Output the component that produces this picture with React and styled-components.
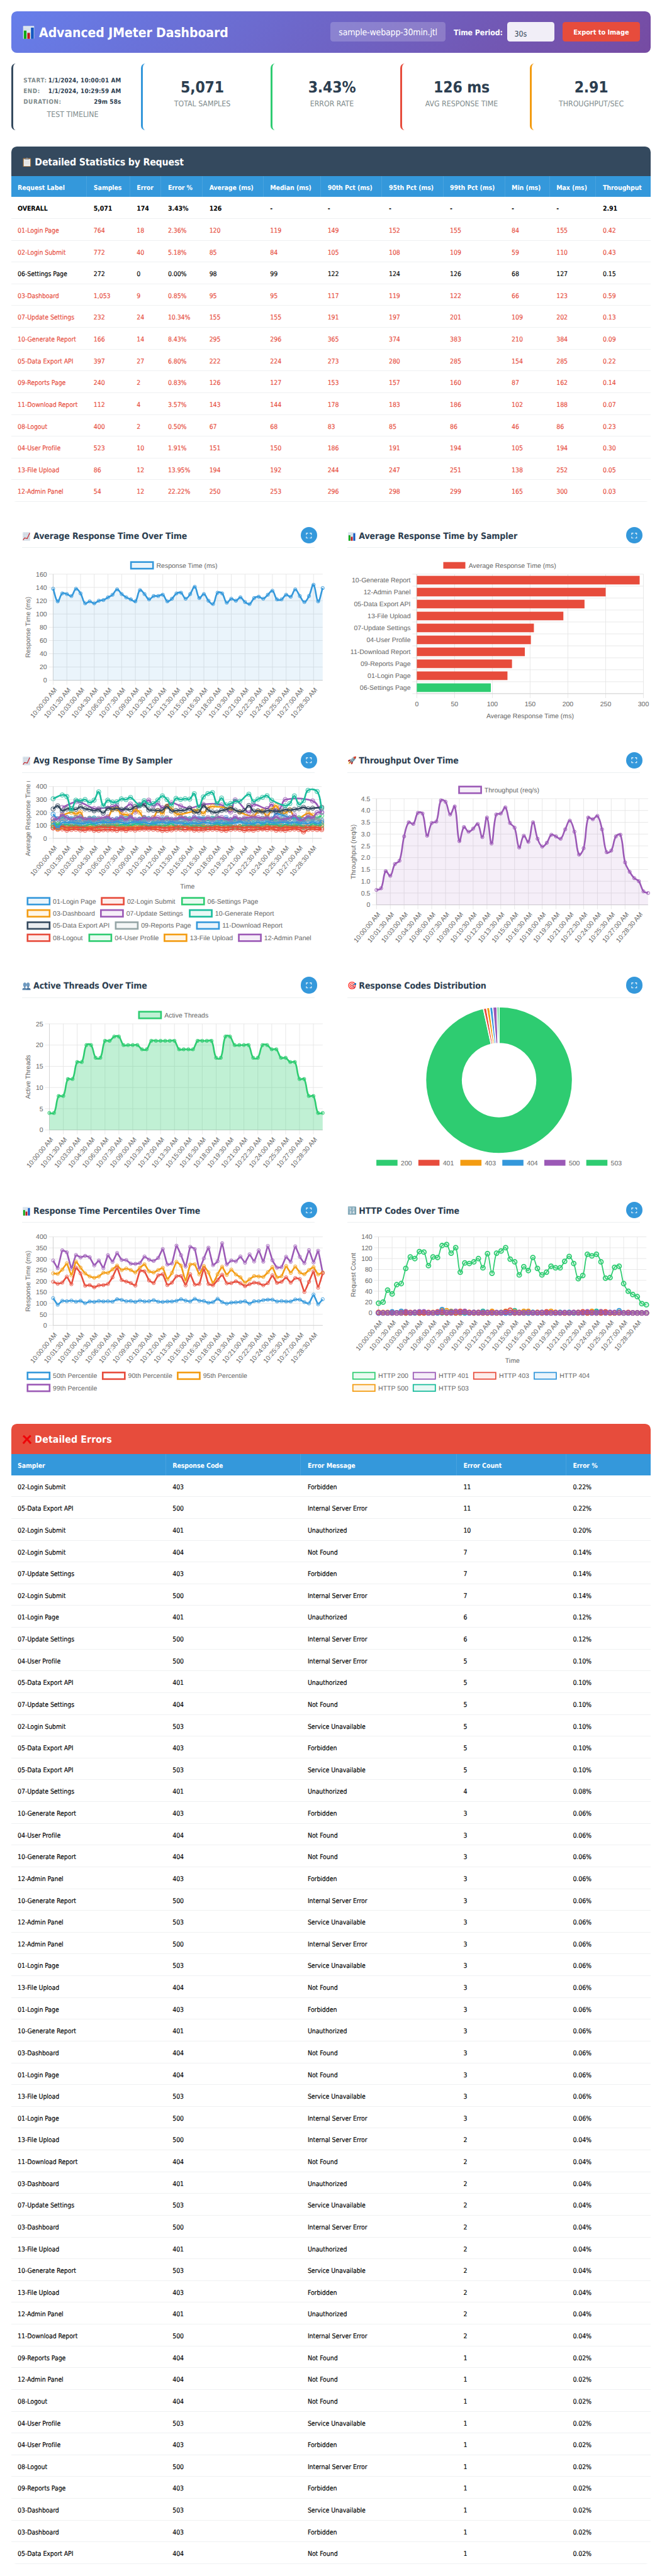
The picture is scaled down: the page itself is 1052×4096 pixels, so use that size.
import React from 'react';
import styled, { createGlobalStyle } from 'styled-components';

/* 1rem = 10 design pixels of a 1200px wide page */
const GlobalStyle = createGlobalStyle`
  html { font-size: 8.7667px; }
  body {
    margin: 0;
    background: #fff;
    color: #000;
    font-family: "DejaVu Sans Condensed", "DejaVu Sans", Tahoma, sans-serif;
    text-rendering: geometricPrecision;
  }
  *, *::before, *::after { box-sizing: border-box; }
`;

const C = {
  blue: '#3498db', red: '#e74c3c', green: '#2ecc71', orange: '#f39c12',
  purple: '#9b59b6', teal: '#1abc9c', dark: '#34495e', grey: '#95a5a6', ink: '#2c3e50',
};

const Page = styled.main`
  width: 120rem;
  height: 467.26rem;
  padding: 2rem;
  overflow: hidden;
`;

const Header = styled.header`
  display: flex;
  align-items: center;
  justify-content: space-between;
  height: 7.55rem;
  padding: 0 2rem;
  border-radius: 1rem;
  color: #fff;
  background: linear-gradient(135deg, #667eea 0%, #764ba2 100%);
`;

const Title = styled.h1`
  display: flex;
  align-items: center;
  margin: 0;
  padding-top: 0.3rem;
  font-size: 2.4rem;
  letter-spacing: -0.01rem;
  white-space: nowrap;
`;

const Emoji = styled.span`
  display: inline-flex;
  align-items: center;
  justify-content: center;
  flex: none;
  width: 1em;
  margin-right: 0.285em;
  font-family: "Noto Color Emoji";
  font-weight: 400;
  line-height: 1;
  letter-spacing: 0;
  & > span { font-size: 0.84em; }
  & > svg { width: 1em; height: 1em; }
`;

const Controls = styled.div`
  display: flex;
  align-items: center;
`;

const FileName = styled.div`
  display: flex;
  align-items: center;
  width: 20.8rem;
  height: 3.55rem;
  padding: 0.3rem 0 0 1.5rem;
  border-radius: 0.5rem;
  background: rgba(255, 255, 255, 0.2);
  font-size: 1.6rem;
  letter-spacing: -0.02rem;
  white-space: nowrap;
`;

const FieldLabel = styled.label`
  width: 9.7rem;
  margin-left: 1.55rem;
  padding-top: 0.25rem;
  font-size: 1.4rem;
  font-weight: 700;
  letter-spacing: -0.01rem;
  white-space: nowrap;
`;

const PeriodField = styled.div`
  display: flex;
  align-items: center;
  width: 8.5rem;
  height: 3.55rem;
  padding: 0.7rem 0 0 1.3rem;
  border-radius: 0.5rem;
  background: rgba(255, 255, 255, 0.9);
  color: ${C.ink};
  font-size: 1.4rem;
`;

const ExportButton = styled.button`
  width: 14.05rem;
  height: 3.55rem;
  margin-left: 1.5rem;
  padding: 0.2rem 0 0;
  border: 0;
  border-radius: 0.5rem;
  background: ${C.red};
  color: #fff;
  font: 700 1.25rem "DejaVu Sans Condensed", sans-serif;
  letter-spacing: -0.005rem;
`;

const Summary = styled.section`
  display: grid;
  grid-template-columns: repeat(5, minmax(0, 1fr));
  gap: 1.5rem;
  margin-top: 2rem;
`;

const Card = styled.div`
  height: 12.05rem;
  padding: 2.15rem 2rem 0;
  border-left: 0.4rem solid ${p => p.$accent};
  border-radius: 0.8rem;
  text-align: center;
`;

const TimeRow = styled.div`
  display: flex;
  justify-content: space-between;
  align-items: center;
  width: 17.7rem;
  margin-left: -0.1rem;
  height: 1.93rem;
  color: ${C.ink};
  font-size: 1.12rem;
  font-weight: 700;
  letter-spacing: 0.018rem;
  white-space: nowrap;
`;

const TimeKey = styled.span`
  color: #7f8c8d;
  letter-spacing: 0.07rem;
`;

const BigValue = styled.div`
  height: 3.4rem;
  margin-top: 0.45rem;
  color: ${C.ink};
  font-size: 2.8rem;
  font-weight: 700;
  line-height: 3.4rem;
  letter-spacing: -0.02rem;
`;

const CardLabel = styled.div`
  margin-top: ${p => (p.$top || 0)}rem;
  color: #7f8c8d;
  font-size: 1.4rem;
  line-height: 1.8rem;
  white-space: nowrap;
`;

const Section = styled.section`
  margin-top: 3rem;
  border-radius: 1rem;
  overflow: hidden;
`;

const SectionTitle = styled.h2`
  display: flex;
  align-items: center;
  height: ${p => p.$height}rem;
  margin: 0;
  padding: 0.2rem 2rem 0;
  background: ${p => p.$bg};
  color: #fff;
  font-size: 1.8rem;
  letter-spacing: ${p => p.$tracking || 0}rem;
`;

const statsColumns = '13.78fr 7.8fr 5.66fr 7.5fr 11.02fr 10.42fr 11.1fr 11.08fr 11.17fr 8.12fr 8.41fr 9.92fr';
const errorColumns = '28.08fr 24.49fr 28.23fr 19.85fr 15.35fr';

const Row = styled.div`
  display: grid;
  grid-template-columns: ${p => p.$columns};
  height: ${p => p.$height || 3.95}rem;
  border-bottom: 1px solid #eff1f2;
  color: ${p => (p.$failed ? C.red : '#000')};
  font-size: 1.2rem;
  font-weight: ${p => (p.$bold ? 700 : 400)};
  letter-spacing: -0.01rem;
  -webkit-text-stroke: ${p => (p.$bold ? 0 : 0.15)}px currentColor;
`;

const HeadRow = styled(Row)`
  border-bottom: 0;
  background: ${C.blue};
  color: #fff;
  font-weight: 700;
`;

const Cell = styled.div`
  display: flex;
  align-items: center;
  min-width: 0;
  padding: 0.5rem 0 0 1.2rem;
  white-space: nowrap;
`;

const HeadCell = styled(Cell)`
  border-right: 1px solid rgba(255, 255, 255, 0.1);
  &:last-child { border-right: 0; }
`;

const ChartGrid = styled.section`
  display: grid;
  grid-template-columns: repeat(2, minmax(0, 1fr));
  gap: 2rem;
  margin-top: 3.05rem;
`;

const ChartCard = styled.article`
  position: relative;
  height: 38.8rem;
  padding: 2rem;
  border-radius: 1rem;
  background: #fff;
`;

const ChartTitle = styled.h3`
  display: flex;
  align-items: center;
  height: 3.3rem;
  margin: 0 0 1.55rem;
  padding-bottom: 0.85rem;
  border-bottom: 0.2rem solid #ecf0f1;
  color: ${C.ink};
  font-size: 1.6rem;
  letter-spacing: -0.012rem;
  white-space: nowrap;
`;

const ExpandButton = styled.button`
  position: absolute;
  top: 1.5rem;
  right: 1.5rem;
  display: flex;
  align-items: center;
  justify-content: center;
  width: 3rem;
  height: 3rem;
  padding: 0.1rem 0 0;
  border: 0;
  border-radius: 50%;
  background: ${C.blue};
  & > svg { width: 1.1rem; height: 1.1rem; }
`;

const Plot = styled.svg`
  display: block;
  width: 55rem;
  height: 30rem;
  overflow: hidden;
  font-family: "Liberation Sans", Arial, sans-serif;
  font-size: 12px;
`;

/* ---------- icons ---------- */

const BarsIcon = () => (
  <Emoji>
    <svg viewBox="0 0 16 16">
      <rect x="1.3" y="0.2" width="13.4" height="15.6" rx="0.5" fill="#dbe5ee" />
      <path d="M1.3 4h13.4M1.3 8h13.4M1.3 12h13.4" stroke="#c3d2df" strokeWidth="0.4" />
      <rect x="2.2" y="5.8" width="3.2" height="10" fill="#0faa14" />
      <rect x="6.4" y="8.6" width="3.2" height="7.2" fill="#c4161c" />
      <rect x="10.8" y="2.2" width="3.4" height="13.6" fill="#1257c2" />
    </svg>
  </Emoji>
);

const TrendIcon = () => (
  <Emoji>
    <svg viewBox="0 0 16 16">
      <rect x="1.3" y="0.2" width="13.4" height="15.6" rx="0.5" fill="#d9e2ea" />
      <path d="M1.3 4h13.4M1.3 8h13.4M1.3 12h13.4M5 .2v15.6M9 .2v15.6M12.6 .2v15.6" stroke="#c0ccd7" strokeWidth="0.4" />
      <path d="M1.9 14.6L4.6 10.6L9.4 11.9L14 1.6" fill="none" stroke="#c4161c" strokeWidth="1.3" />
    </svg>
  </Emoji>
);

const ClipboardIcon = () => (
  <Emoji>
    <svg viewBox="0 0 16 16">
      <rect x="1.6" y="1.6" width="12.8" height="14.2" rx="1" fill="#a9763f" />
      <rect x="2.8" y="3" width="10.4" height="11.4" fill="#ececec" />
      <path d="M4.4 6.5h7.2M4.4 8.5h7.2M4.4 10.5h7.2" stroke="#cfcfcf" strokeWidth="0.6" />
      <path d="M4.4 3.8V2.2h2.2L8 .2l1.4 2h2.2v1.6z" fill="#8d9399" />
    </svg>
  </Emoji>
);

const PeopleIcon = () => (
  <Emoji>
    <svg viewBox="0 0 16 16" fill="#5d86ad">
      <ellipse cx="5" cy="5.4" rx="3" ry="4" fill="#6f9ac0" />
      <ellipse cx="11" cy="5.4" rx="3" ry="4" fill="#6f9ac0" />
      <path d="M4 8h2v3c1.500.3 2 1.300 2 2.500V15H.6v-1.500C.6 12 2 11.300 4 11z" />
      <path d="M10 8h2v3c2 .3 3.400 1 3.400 2.500V15H8v-1.500c0-1.200.5-2.200 2-2.500z" fill="#4b749c" />
    </svg>
  </Emoji>
);

const CrossIcon = () => (
  <Emoji>
    <svg viewBox="0 0 16 16">
      <path d="M2 1.800C5 4.500 11 10.500 14.300 14.400M14 1.600C10.500 4.800 5 10.500 1.800 14.400" fill="none" stroke="#ee0508" strokeWidth="3.100" />
    </svg>
  </Emoji>
);

const Glyph = ({ children }) => <Emoji><span>{children}</span></Emoji>;

/* ---------- data ---------- */

const statsHead = ['Request Label', 'Samples', 'Error', 'Error %', 'Average (ms)', 'Median (ms)', '90th Pct (ms)', '95th Pct (ms)', '99th Pct (ms)', 'Min (ms)', 'Max (ms)', 'Throughput'];
const stats = `OVERALL|5,071|174|3.43%|126|-|-|-|-|-|-|2.91
01-Login Page|764|18|2.36%|120|119|149|152|155|84|155|0.42
02-Login Submit|772|40|5.18%|85|84|105|108|109|59|110|0.43
06-Settings Page|272|0|0.00%|98|99|122|124|126|68|127|0.15
03-Dashboard|1,053|9|0.85%|95|95|117|119|122|66|123|0.59
07-Update Settings|232|24|10.34%|155|155|191|197|201|109|202|0.13
10-Generate Report|166|14|8.43%|295|296|365|374|383|210|384|0.09
05-Data Export API|397|27|6.80%|222|224|273|280|285|154|285|0.22
09-Reports Page|240|2|0.83%|126|127|153|157|160|87|162|0.14
11-Download Report|112|4|3.57%|143|144|178|183|186|102|188|0.07
08-Logout|400|2|0.50%|67|68|83|85|86|46|86|0.23
04-User Profile|523|10|1.91%|151|150|186|191|194|105|194|0.30
13-File Upload|86|12|13.95%|194|192|244|247|251|138|252|0.05
12-Admin Panel|54|12|22.22%|250|253|296|298|299|165|300|0.03`.split('\n').map(r => r.split('|'));

const samplers = {
  '01': '01-Login Page', '02': '02-Login Submit', '03': '03-Dashboard', '04': '04-User Profile',
  '05': '05-Data Export API', '07': '07-Update Settings', '08': '08-Logout', '09': '09-Reports Page',
  10: '10-Generate Report', 11: '11-Download Report', 12: '12-Admin Panel', 13: '13-File Upload',
};
const messages = { 401: 'Unauthorized', 403: 'Forbidden', 404: 'Not Found', 500: 'Internal Server Error', 503: 'Service Unavailable' };
const percents = { 11: '0.22%', 10: '0.20%', 7: '0.14%', 6: '0.12%', 5: '0.10%', 4: '0.08%', 3: '0.06%', 2: '0.04%', 1: '0.02%' };
const errors = `02 403 11,05 500 11,02 401 10,02 404 7,07 403 7,02 500 7,01 401 6,07 500 6,04 500 5,05 401 5,07 404 5,02 503 5,05 403 5,05 503 5,07 401 4,10 403 3,04 404 3,10 404 3,12 403 3,10 500 3,12 503 3,12 500 3,01 503 3,13 404 3,01 403 3,10 401 3,03 404 3,01 404 3,13 503 3,01 500 3,13 500 2,11 404 2,03 401 2,07 503 2,03 500 2,13 401 2,10 503 2,13 403 2,12 401 2,11 500 2,09 404 1,12 404 1,08 404 1,04 503 1,04 403 1,08 500 1,09 403 1,03 503 1,03 403 1,05 404 1`
  .split(',').map(s => s.split(' ')).map(([s, c, n]) => [samplers[s], c, messages[c], n, percents[n]]);

const list = s => s.split(/[\s,]+/).map(Number);
const sparse = s => s.split(/\s+/).map(p => p.split(':').map(Number));
const dense = a => a.map((v, i) => [i, v]);

const avgTime = list('138 119 131 130 127 138 131 116 119 116 120 121 125 129 137 130 125 122 119 136 130 122 127 127 129 119 123 131 132 123 130 141 124 130 120 115 132 131 117 123 120 125 118 115 124 126 123 129 135 122 122 129 126 137 127 118 127 144 119 139');
const throughput = list('.63 .70 1.43 1.23 1.73 1.87 2.9 3.5 3.43 3.9 3.87 2.93 3.47 3.53 4.43 4.37 3.83 4.17 2.7 3.3 3.1 3.23 3.43 2.87 3.7 2.6 3.83 3.87 4.13 3.47 3.27 2.43 2.93 2.67 3.5 2.8 2.47 2.63 2.97 2.9 2.8 3.2 3.57 3.1 2.13 2.4 3.7 3.63 3.77 3.2 2.23 2.3 2.9 2.97 1.8 1.4 1.13 1 .57 .5');
const threads = list('4 4 8 8 12 12 16 16 20 20 17 17 21 21 22 22 20 20 20 20 19 19 21 21 21 21 21 21 19 19 19 19 21 21 21 21 17 17 22 22 20 20 20 20 17 17 20 20 19 19 17 17 16 16 12 12 8 8 4 4');
const p50 = list('123 93 111 109 112 107 111 100 108 106 110 108 109 107 118 115 109 110 106 112 108 109 114 107 106 108 108 111 118 112 108 120 111 110 102 105 120 105 98 103 104 106 109 98 109 109 114 116 116 108 110 108 108 117 116 105 99 139 95 118');
const p90 = list('197 188 193 220 186 261 235 179 182 172 181 182 187 217 261 205 198 191 180 247 244 203 191 226 231 182 193 222 223 181 231 184 187 257 187 181 205 229 190 191 199 190 177 186 193 190 181 191 226 192 197 217 193 214 209 151 197 244 170 235');
const p95 = list('235 233 252 280 226 288 261 235 221 215 221 238 237 253 270 250 257 250 239 261 276 244 239 250 260 208 237 287 270 200 275 276 230 268 239 190 231 265 228 252 230 217 193 208 223 221 219 240 263 217 222 268 237 266 239 231 250 263 230 239');
const p99 = list('293 259 339 330 257 318 307 314 308 271 293 259 317 287 327 296 295 279 278 282 311 297 291 305 345 275 280 360 317 266 355 345 254 303 351 272 290 371 275 293 289 311 283 321 289 339 288 359 294 261 263 310 287 357 310 281 340 284 337 238');
const http200 = list('18 20 42 35 52 54 82 103 100 113 112 87 103 102 124 126 110 120 75 92 91 94 100 83 109 73 110 114 120 99 94 70 85 78 102 82 70 75 86 83 83 95 104 91 63 69 108 105 108 94 64 65 84 86 54 40 34 30 17 15');
const http401 = list('0 0 0 0 0 0 2 0 1 2 2 0 0 1 2 1 0 3 1 3 0 1 0 1 1 0 1 0 1 0 1 0 0 1 0 0 1 0 0 0 0 1 0 1 0 0 2 0 0 2 0 1 1 0 0 0 0 0 0 0');
const http403 = list('1 0 0 0 0 0 0 1 1 0 0 1 0 2 1 0 1 0 3 2 1 0 1 0 0 1 0 0 2 5 0 1 0 1 0 1 0 2 0 1 0 0 0 1 1 2 0 1 0 0 2 0 0 0 0 1 0 0 0 0');
const http404 = list('0 0 0 2 0 3 1 0 0 0 1 0 0 0 6 0 2 0 1 0 0 1 1 0 1 0 0 1 0 0 0 1 0 0 1 0 0 1 0 0 1 0 1 0 1 0 0 0 1 0 0 1 0 4 0 0 0 0 0 0');
const http500 = list('1 1 1 0 0 1 2 0 0 1 0 0 1 0 4 4 3 1 0 1 1 1 0 0 1 3 0 1 3 0 2 0 3 3 0 1 0 1 3 1 0 0 0 0 0 1 0 3 0 2 1 0 0 1 0 0 0 0 0 0');
const http503 = list('0 0 0 1 0 0 0 0 1 0 0 0 0 1 0 1 0 0 0 0 0 0 0 3 0 0 0 0 0 1 4 0 1 0 1 0 1 0 0 0 1 0 1 0 0 0 1 0 3 0 1 0 0 1 0 0 0 0 0 0');

/* repeatable scatter around a sampler's mean */
const scatter = (seed, mean, spread, fixed = {}) => {
  let s = seed * 7919;
  return dense(Array.from({ length: 60 }, (_, i) => {
    s = (s * 16807) % 2147483647;
    return fixed[i] ?? mean + (s / 2147483647 - 0.5) * 2 * spread;
  }));
};

const bySampler = [
  { label: '01-Login Page', color: C.blue, points: scatter(11, 121, 6, { 0: 124, 1: 84, 2: 122 }) },
  { label: '02-Login Submit', color: C.red, points: scatter(23, 84, 5, { 1: 82, 2: 93 }) },
  { label: '06-Settings Page', color: C.green, points: scatter(37, 98, 14, { 0: 95 }) },
  { label: '03-Dashboard', color: C.orange, points: scatter(41, 94, 10, { 0: 110, 1: 76 }) },
  { label: '07-Update Settings', color: C.purple, points: scatter(53, 154, 14, { 0: 150, 2: 183, 53: 180, 56: 172, 57: 158, 58: 199, 59: 200 }) },
  { label: '10-Generate Report', color: C.teal, points: sparse('0:306 2:335 3:323 4:218 5:295 6:290 7:300 8:277 9:295 10:359 11:252 12:295 13:280 14:282 15:305 16:299 17:316 19:257 20:291 21:262 22:269 23:296 24:328 25:300 26:257 27:309 28:300 29:306 30:303 31:345 32:240 33:320 34:346 35:353 36:269 37:311 38:258 39:269 40:286 41:286 43:341 44:285 45:303 46:317 47:329 48:295 51:252 52:269 53:328 54:263 55:291 56:371 58:362 59:230') },
  { label: '05-Data Export API', color: C.dark, points: sparse('0:227 1:251 2:213 3:227 4:230 5:224 6:243 7:228 8:224 9:213 10:221 11:196 12:232 13:226 14:232 15:224 16:227 17:222 18:246 19:251 20:258 21:220 22:218 23:215 24:218 25:244 26:211 27:215 28:216 29:218 30:232 31:205 32:201 33:252 34:221 35:204 36:202 37:216 38:221 39:237 40:218 41:206 42:215 43:254 44:211 45:213 46:204 47:213 48:213 49:209 50:211 51:222 52:218 53:224 54:229 55:240 56:229 57:233 59:240') },
  { label: '09-Reports Page', color: C.grey, points: scatter(61, 136, 16, { 0: 150, 1: 108, 56: 136, 57: 150, 58: 148, 59: 143 }) },
  { label: '11-Download Report', color: C.blue, points: scatter(79, 147, 14, { 0: 186, 1: 152, 2: 155, 49: 190, 50: 182, 51: 172 }) },
  { label: '08-Logout', color: C.red, points: scatter(83, 67, 6, { 0: 80, 55: 50 }) },
  { label: '04-User Profile', color: C.green, points: scatter(97, 148, 14, { 0: 100, 1: 90, 59: 176 }) },
  { label: '13-File Upload', color: C.orange, points: sparse('0:130 2:175 4:202 5:188 6:202 7:140 10:140 12:160 13:221 14:226 15:188 16:183 17:177 18:221 19:202 20:155 22:160 23:216 24:190 25:249 26:230 27:192 28:186 31:211 32:221 33:192 34:235 35:247 39:230 41:202 44:170 45:209 46:212 47:172 48:221 49:252 50:197 51:195 52:221 53:160 54:155 56:195 57:178 59:120') },
  { label: '12-Admin Panel', color: C.purple, points: sparse('2:239 5:283 6:278 9:230 10:230 13:245 14:255 15:213 17:265 18:204 19:263 20:268 21:295 22:250 23:269 24:237 26:274 28:250 30:233 33:262 37:258 39:204 40:297 43:199 44:260 47:230 48:262 49:213 50:240 51:299 57:289 59:202') },
];

/* ---------- chart helpers ---------- */

const times = Array.from({ length: 20 }, (_, i) => {
  const s = i * 90;
  return `10:${String(Math.floor(s / 60)).padStart(2, '0')}:${String(s % 60).padStart(2, '0')} AM`;
});

/* cardinal-style spline with control points kept inside the plot area */
const spline = (pts, tension, top, bottom) => {
  const clamp = v => Math.max(top, Math.min(bottom, v));
  const ctl = pts.map((p, i) => {
    const a = pts[i - 1] || p;
    const b = pts[i + 1] || p;
    const d1 = Math.hypot(p[0] - a[0], p[1] - a[1]);
    const d2 = Math.hypot(b[0] - p[0], b[1] - p[1]);
    const t1 = (tension * d1) / (d1 + d2 || 1);
    const t2 = (tension * d2) / (d1 + d2 || 1);
    const dx = b[0] - a[0];
    const dy = b[1] - a[1];
    return [p[0] - t1 * dx, clamp(p[1] - t1 * dy), p[0] + t2 * dx, clamp(p[1] + t2 * dy)];
  });
  return pts.map((p, i) => (i === 0
    ? `M${p[0]},${p[1]}`
    : `C${ctl[i - 1][2]},${ctl[i - 1][3]} ${ctl[i][0]},${ctl[i][1]} ${p[0]},${p[1]}`)).join(' ');
};

const GRID = '#e5e5e5';

const LegendItem = ({ x, y, label, color, stroke = 3, fill = 0.1 }) => (
  <g>
    <rect x={x} y={y - 6} width="40" height="12" fill={color} fillOpacity={fill} stroke={color} strokeWidth={stroke} />
    <text x={x + 46} y={y + 4.2} fill="#666">{label}</text>
  </g>
);

const LineChart = ({ box, max, step, format = String, yTitle, yTitleX = 11, xTitleY, legend, series, tension = 0.4, area = 0, width = 3, radius = 3, ring = 1, pointFill = 0.1 }) => {
  const [left, top, right, bottom] = box;
  const px = i => left + (i * (right - left)) / 59;
  const py = v => bottom - (v * (bottom - top)) / max;
  const rows = Array.from({ length: Math.round(max / step) + 1 }, (_, i) => i * step);
  const midY = (top + bottom) / 2;
  return (
    <Plot viewBox="0 0 550 300">
      {rows.map(v => (
        <g key={v}>
          <line x1={left - 8} x2={right} y1={py(v)} y2={py(v)} stroke={GRID} />
          <text x={left - 11.2} y={py(v) + 4.3} textAnchor="end" fill="#666">{format(v)}</text>
        </g>
      ))}
      {times.map((t, i) => (
        <g key={t}>
          <line x1={px(i * 3)} x2={px(i * 3)} y1={top} y2={bottom + 8} stroke={GRID} />
          <text transform={`translate(${px(i * 3) + 4.3} ${bottom + 15}) rotate(-50)`} y="4.2" textAnchor="end" fill="#666">{t}</text>
        </g>
      ))}
      <path d={`M${left},${top}V${bottom}H${right}`} fill="none" stroke="#cfcfcf" />
      <text transform={`translate(${yTitleX} ${midY}) rotate(-90)`} y="4.2" textAnchor="middle" fill="#666">{yTitle}</text>
      {xTitleY && <text x={(left + right) / 2} y={xTitleY + 4.2} textAnchor="middle" fill="#666">Time</text>}
      {[...series].reverse().map((s, k) => {
        const pts = s.points.map(([i, v]) => [px(i), py(v)]);
        const d = spline(pts, tension, top, bottom);
        return (
          <g key={k}>
            {area > 0 && <path d={`${d} V${bottom} H${pts[0][0]} Z`} fill={s.color} fillOpacity={area} />}
            <path d={d} fill="none" stroke={s.color} strokeWidth={width} />
            {pts.map(([x, y]) => (
              <circle key={x} cx={x} cy={y} r={radius} fill={pointFill ? s.color : '#fff'} fillOpacity={pointFill || 0.1} stroke={s.color} strokeWidth={ring} />
            ))}
          </g>
        );
      })}
      {legend}
    </Plot>
  );
};

const barData = [['10-Generate Report', 295], ['12-Admin Panel', 250], ['05-Data Export API', 222], ['13-File Upload', 194], ['07-Update Settings', 155], ['04-User Profile', 151], ['11-Download Report', 143], ['09-Reports Page', 126], ['01-Login Page', 120], ['06-Settings Page', 98]];

const BarChart = () => {
  const left = 125.9, right = 536.7, top = 31.9, bottom = 248.6;
  const band = (bottom - top) / 10;
  const px = v => left + (v * (right - left)) / 300;
  return (
    <Plot viewBox="0 0 550 300">
      {[0, 50, 100, 150, 200, 250, 300].map(v => (
        <g key={v}>
          <line x1={px(v)} x2={px(v)} y1={top} y2={bottom + 8} stroke={GRID} />
          <text x={px(v)} y={271} textAnchor="middle" fill="#666">{v}</text>
        </g>
      ))}
      {Array.from({ length: 11 }, (_, i) => (
        <line key={i} x1={left - 8} x2={right} y1={top + i * band} y2={top + i * band} stroke={GRID} />
      ))}
      <path d={`M${left},${top}V${bottom}H${right}`} fill="none" stroke="#cfcfcf" />
      {barData.map(([label, v], i) => (
        <g key={label}>
          <rect x={left} y={top + i * band + band * 0.14} width={px(v) - left} height={band * 0.72} fill={v === 98 ? C.green : C.red} />
          <text x={left - 11.2} y={top + (i + 0.5) * band + 4.2} textAnchor="end" fill="#666">{label}</text>
        </g>
      ))}
      <LegendItem x={173.9} y={15.9} label="Average Response Time (ms)" color={C.red} stroke={0} fill={1} />
      <text x={(left + right) / 2} y={292.6} textAnchor="middle" fill="#666">Average Response Time (ms)</text>
    </Plot>
  );
};

const codes = [['200', 4897, C.green], ['401', 35, C.red], ['403', 35, C.orange], ['404', 35, C.blue], ['500', 46, C.purple], ['503', 23, C.green]];

const Doughnut = () => {
  const cx = 275, cy = 134, R = 133, r = 66.5;
  let acc = 0;
  const at = (f, rad) => [cx + rad * Math.sin(f * 2 * Math.PI), cy - rad * Math.cos(f * 2 * Math.PI)].join(',');
  return (
    <Plot viewBox="0 0 550 300">
      {codes.map(([code, n, color]) => {
        const a = acc / 5071;
        acc += n;
        const b = acc / 5071;
        const big = b - a > 0.5 ? 1 : 0;
        return <path key={code} d={`M${at(a, R)}A${R},${R} 0 ${big} 1 ${at(b, R)}L${at(b, r)}A${r},${r} 0 ${big} 0 ${at(a, r)}Z`} fill={color} stroke="#fff" strokeWidth="2" />;
      })}
      {codes.map(([code, , color], i) => (
        <g key={code}>
          <rect x={52.6 + i * 76.1} y="278.6" width="38.3" height="10.6" fill={color} />
          <text x={97 + i * 76.1} y="288.1" fill="#666">{code}</text>
        </g>
      ))}
    </Plot>
  );
};

const one = (color, values) => [{ color, points: dense(values) }];
const samplerLegend = [[10, 217.8, 0], [144.4, 217.8, 1], [290, 217.8, 2], [10, 239.9, 3], [143, 239.9, 4], [304, 239.9, 5], [10, 262, 6], [169.8, 262, 7], [317, 262, 8], [10, 284.2, 9], [121.9, 284.2, 10], [258.2, 284.2, 11], [393, 284.2, 12]];

const charts = [
  [<TrendIcon />, 'Average Response Time Over Time', <LineChart box={[56.4, 31.9, 545, 224.4]} max={160} step={20} yTitle="Response Time (ms)" area={0.1} series={one(C.blue, avgTime)}
    legend={<LegendItem x={197.5} y={15.9} label="Response Time (ms)" color={C.blue} />} />],
  [<BarsIcon />, 'Average Response Time by Sampler', <BarChart />],
  [<TrendIcon />, 'Avg Response Time By Sampler', <LineChart box={[56.4, 9.9, 543.2, 103.9]} max={400} step={100} yTitle="Average Response Time (ms)" xTitleY={190.3} series={bySampler} radius={4}
    legend={samplerLegend.map(([x, y, i]) => <LegendItem key={i} x={x} y={y} label={bySampler[i].label} color={bySampler[i].color} />)} />],
  [<Glyph>🚀</Glyph>, 'Throughput Over Time', <LineChart box={[52.8, 31.9, 545.1, 224.4]} max={4.5} step={0.5} format={v => (v ? v.toFixed(1) : '0')} yTitle="Throughput (req/s)" area={0.1} series={one(C.purple, throughput)}
    legend={<LegendItem x={202.5} y={15.9} label="Throughput (req/s)" color={C.purple} />} />],
  [<PeopleIcon />, 'Active Threads Over Time', <LineChart box={[49.6, 31.9, 545, 224.4]} max={25} step={5} yTitle="Active Threads" area={0.3} pointFill={0.3} series={one(C.green, threads)}
    legend={<LegendItem x={212} y={15.9} label="Active Threads" color={C.green} fill={0.3} />} />],
  [<Glyph>🎯</Glyph>, 'Response Codes Distribution', <Doughnut />],
  [<BarsIcon />, 'Response Time Percentiles Over Time', <LineChart box={[56.4, 9.9, 545, 170.4]} max={400} step={50} yTitle="Response Time (ms)" tension={0.1} pointFill={0}
    series={[[C.blue, p50], [C.red, p90], [C.orange, p95], [C.purple, p99]].map(([color, v]) => ({ color, points: dense(v) }))}
    legend={[[10, 261.9, '50th', C.blue], [146.3, 261.9, '90th', C.red], [282.2, 261.9, '95th', C.orange], [10, 283.9, '99th', C.purple]].map(([x, y, t, c]) => <LegendItem key={t} x={x} y={y} label={`${t} Percentile`} color={c} fill={0} />)} />],
  [<Glyph>🔢</Glyph>, 'HTTP Codes Over Time', <LineChart box={[56.5, 9.9, 542, 147.9]} max={140} step={20} yTitle="Request Count" xTitleY={234.4} width={2} radius={4} ring={2}
    series={[[C.green, http200], [C.purple, http401], [C.red, http403], [C.blue, http404], [C.orange, http500], [C.teal, http503]].map(([color, v]) => ({ color, points: dense(v) }))}
    legend={[[10, 261.9, 200, C.green], [119.5, 261.9, 401, C.purple], [229, 261.9, 403, C.red], [338.7, 261.9, 404, C.blue], [10, 283.9, 500, C.orange], [119.5, 283.9, 503, C.teal]].map(([x, y, t, c]) => <LegendItem key={t} x={x} y={y} label={`HTTP ${t}`} color={c} stroke={2} />)} />],
];

const cards = [['5,071', 'TOTAL SAMPLES', C.blue], ['3.43%', 'ERROR RATE', C.green], ['126 ms', 'AVG RESPONSE TIME', C.red], ['2.91', 'THROUGHPUT/SEC', C.orange]];

export default function App() {
  return (
    <Page>
      <GlobalStyle />
      <Header>
        <Title><BarsIcon />Advanced JMeter Dashboard</Title>
        <Controls>
          <FileName>sample-webapp-30min.jtl</FileName>
          <FieldLabel>Time Period:</FieldLabel>
          <PeriodField>30s</PeriodField>
          <ExportButton>Export to Image</ExportButton>
        </Controls>
      </Header>

      <Summary>
        <Card $accent={C.dark}>
          <TimeRow><TimeKey>START:</TimeKey><span>1/1/2024, 10:00:01 AM</span></TimeRow>
          <TimeRow><TimeKey>END:</TimeKey><span>1/1/2024, 10:29:59 AM</span></TimeRow>
          <TimeRow><TimeKey>DURATION:</TimeKey><span>29m 58s</span></TimeRow>
          <CardLabel $top={0.5}>TEST TIMELINE</CardLabel>
        </Card>
        {cards.map(([value, label, accent]) => (
          <Card key={label} $accent={accent}>
            <BigValue>{value}</BigValue>
            <CardLabel $top={0.5}>{label}</CardLabel>
          </Card>
        ))}
      </Summary>

      <Section>
        <SectionTitle $bg={C.dark} $height={5.34} $tracking={-0.022}><ClipboardIcon />Detailed Statistics by Request</SectionTitle>
        <HeadRow $columns={statsColumns} $height={3.8} $bold>
          {statsHead.map(h => <HeadCell key={h}>{h}</HeadCell>)}
        </HeadRow>
        {stats.map((row, i) => (
          <Row key={row[0]} $columns={statsColumns} $bold={i === 0} $failed={i > 0 && row[2] !== '0'}>
            {row.map((v, j) => <Cell key={j}>{v}</Cell>)}
          </Row>
        ))}
      </Section>

      <ChartGrid>
        {charts.map(([icon, title, chart]) => (
          <ChartCard key={title}>
            <ChartTitle>{icon}{title}</ChartTitle>
            <ExpandButton aria-label="Expand">
              <svg viewBox="0 0 11 11" fill="none" stroke="#fff" strokeWidth="1.2">
                <path d="M1 4V1h3M7 1h3v3M10 7v3H7M4 10H1V7" />
              </svg>
            </ExpandButton>
            {chart}
          </ChartCard>
        ))}
      </ChartGrid>

      <Section>
        <SectionTitle $bg={C.red} $height={5.42} $tracking={0.01}><CrossIcon />Detailed Errors</SectionTitle>
        <HeadRow $columns={errorColumns} $height={3.87} $bold>
          {['Sampler', 'Response Code', 'Error Message', 'Error Count', 'Error %'].map(h => <HeadCell key={h}>{h}</HeadCell>)}
        </HeadRow>
        {errors.map((row, i) => (
          <Row key={i} $columns={errorColumns}>
            {row.map((v, j) => <Cell key={j}>{v}</Cell>)}
          </Row>
        ))}
      </Section>
    </Page>
  );
}
